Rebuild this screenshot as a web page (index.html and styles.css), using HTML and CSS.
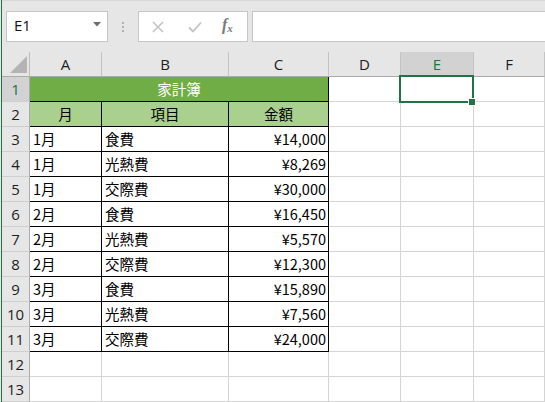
FILE: index.html
```html
<!DOCTYPE html>
<html lang="ja">
<head>
<meta charset="utf-8">
<link rel="stylesheet" href="styles.css">
</head>
<body>
<div class="app">
  <div class="topbar">
    <div class="namebox">
      <span class="nb-text">E1</span>
      <svg class="nb-arrow" width="8" height="5" viewBox="0 0 8 5"><polygon points="0,0 8,0 4,4.5" fill="#6e6e6e"/></svg>
    </div>
    <div class="dots"><i></i><i></i><i></i></div>
    <div class="fbuttons">
      <svg class="ico" width="12" height="12" viewBox="0 0 12 12"><path d="M1 1 L11 11 M11 1 L1 11" stroke="#c3c3c3" stroke-width="1.6" fill="none"/></svg>
      <svg class="ico" width="14" height="12" viewBox="0 0 14 12"><path d="M1 6.5 L5 10.5 L13 1.5" stroke="#c3c3c3" stroke-width="1.8" fill="none"/></svg>
      <span class="fx">f<span class="fx-x">x</span></span>
    </div>
    <div class="finput"></div>
  </div>

  <div class="sheet">
    <div class="corner"><svg width="17" height="17" viewBox="0 0 17 17"><polygon points="17,0 17,17 0,17" fill="#b4b4b4"/></svg></div>
    <div class="ch">A</div>
    <div class="ch">B</div>
    <div class="ch">C</div>
    <div class="ch">D</div>
    <div class="ch sel">E</div>
    <div class="ch">F</div>

    <div class="rh sel">1</div>
    <div class="c title">家計簿</div>
    <div class="c"></div>
    <div class="c e1"><div class="selbox"></div><div class="handle"></div></div>
    <div class="c"></div>

    <div class="rh">2</div>
    <div class="c t head">月</div>
    <div class="c t head">項目</div>
    <div class="c t head">金額</div>
    <div class="c"></div><div class="c"></div><div class="c"></div>

    <div class="rh">3</div>
    <div class="c t">1月</div><div class="c t">食費</div><div class="c t num">¥14,000</div>
    <div class="c"></div><div class="c"></div><div class="c"></div>

    <div class="rh">4</div>
    <div class="c t">1月</div><div class="c t">光熱費</div><div class="c t num">¥8,269</div>
    <div class="c"></div><div class="c"></div><div class="c"></div>

    <div class="rh">5</div>
    <div class="c t">1月</div><div class="c t">交際費</div><div class="c t num">¥30,000</div>
    <div class="c"></div><div class="c"></div><div class="c"></div>

    <div class="rh">6</div>
    <div class="c t">2月</div><div class="c t">食費</div><div class="c t num">¥16,450</div>
    <div class="c"></div><div class="c"></div><div class="c"></div>

    <div class="rh">7</div>
    <div class="c t">2月</div><div class="c t">光熱費</div><div class="c t num">¥5,570</div>
    <div class="c"></div><div class="c"></div><div class="c"></div>

    <div class="rh">8</div>
    <div class="c t">2月</div><div class="c t">交際費</div><div class="c t num">¥12,300</div>
    <div class="c"></div><div class="c"></div><div class="c"></div>

    <div class="rh">9</div>
    <div class="c t">3月</div><div class="c t">食費</div><div class="c t num">¥15,890</div>
    <div class="c"></div><div class="c"></div><div class="c"></div>

    <div class="rh">10</div>
    <div class="c t">3月</div><div class="c t">光熱費</div><div class="c t num">¥7,560</div>
    <div class="c"></div><div class="c"></div><div class="c"></div>

    <div class="rh">11</div>
    <div class="c t">3月</div><div class="c t">交際費</div><div class="c t num">¥24,000</div>
    <div class="c"></div><div class="c"></div><div class="c"></div>

    <div class="rh">12</div>
    <div class="c"></div><div class="c"></div><div class="c"></div>
    <div class="c"></div><div class="c"></div><div class="c"></div>

    <div class="rh">13</div>
    <div class="c"></div><div class="c"></div><div class="c"></div>
    <div class="c"></div><div class="c"></div><div class="c"></div>
  </div>
</div>
</body>
</html>
```

FILE: styles.css
```css
* { box-sizing: border-box; }
html, body { margin: 0; padding: 0; }
body {
  background: #e6e6e6;
  width: 545px;
  height: 402px;
  overflow: hidden;
  font-family: "Noto Sans CJK JP", sans-serif;
}
.app {
  margin-left: 1px;
  border-left: 1px solid #217346;
  height: 402px;
  display: flex;
  flex-direction: column;
}
.topbar {
  height: 52px;
  flex: none;
  display: flex;
  align-items: flex-start;
  padding: 10px 0 0 4px;
  background: #e6e6e6;
  border-top: 1px solid #d8d8d8;
}
.namebox {
  width: 102px;
  height: 31px;
  background: #fff;
  border: 1px solid #c6c6c6;
  display: flex;
  align-items: center;
  justify-content: space-between;
  padding: 0 6px 2px 7px;
}
.nb-text {
  font-family: "Open Sans", sans-serif;
  font-size: 15px;
  color: #111;
  line-height: 1;
}
.nb-arrow { margin-top: -3px; }
.dots {
  width: 30px;
  height: 31px;
  display: flex;
  flex-direction: column;
  align-items: center;
  justify-content: center;
  gap: 2px;
}
.dots i {
  display: block;
  width: 2px;
  height: 2px;
  background: #b0b0b0;
}
.fbuttons {
  width: 110px;
  height: 31px;
  background: #fff;
  border: 1px solid #c6c6c6;
  display: flex;
  align-items: center;
  padding: 0 0 0 13px;
}
.fbuttons .ico:first-child { margin-right: 24px; }
.fbuttons .ico:nth-child(2) { margin-right: 20px; }
.fx {
  font-family: "Liberation Serif", serif;
  font-style: italic;
  font-weight: bold;
  font-size: 16px;
  color: #7a7a7a;
  line-height: 1;
  margin-top: -3px;
  display: flex;
  align-items: flex-end;
}
.fx-x {
  font-size: 11px;
  margin-left: 0;
  margin-bottom: -1px;
}
.finput {
  margin-left: 4px;
  flex: 1;
  height: 31px;
  background: #fff;
  border: 1px solid #c6c6c6;
  border-right: none;
}

.sheet {
  flex: 1;
  display: grid;
  grid-template-columns: 28px 72px 127px 100px 72px 73px 1fr;
  grid-template-rows: repeat(14, 25px);
  background: #fff;
}
.corner {
  background: #e6e6e6;
  border-right: 1px solid #bdbdbd;
  border-bottom: 1px solid #ababab;
  display: flex;
  align-items: flex-end;
  justify-content: flex-end;
  padding: 0 2px 3px 0;
}
.ch {
  background: #e6e6e6;
  border-right: 1px solid #c4c4c4;
  border-bottom: 1px solid #ababab;
  font-family: "Open Sans", sans-serif;
  font-size: 15px;
  color: #1e1e1e;
  display: flex;
  align-items: center;
  justify-content: center;
  line-height: 1;
  padding-top: 1px;
}
.ch.sel {
  background: #d2d2d2;
  color: #217346;
}
.rh {
  background: #e6e6e6;
  border-right: 1px solid #ababab;
  border-bottom: 1px solid #cfcfcf;
  font-family: "Open Sans", sans-serif;
  font-size: 15px;
  color: #1e1e1e;
  display: flex;
  align-items: center;
  justify-content: center;
  line-height: 1;
}
.rh.sel {
  background: #d2d2d2;
  color: #217346;
}
.c {
  border-right: 1px solid #d4d4d4;
  border-bottom: 1px solid #d4d4d4;
  font-size: 14.5px;
  color: #000;
  line-height: 1;
  display: flex;
  align-items: center;
  padding: 0 3px;
  white-space: nowrap;
}
.c.t {
  border-right-color: #000;
  border-bottom-color: #000;
}
.c.title {
  grid-column: span 3;
  background: #70ad47;
  color: #fff;
  justify-content: center;
  border-right-color: #000;
  border-bottom-color: #000;
}
.c.head {
  background: #a9d08e;
  justify-content: center;
}
.c.num {
  justify-content: flex-end;
  padding-right: 2px;
}
.e1 { position: relative; }
.selbox {
  position: absolute;
  left: -2px;
  top: -2px;
  width: 75px;
  height: 28px;
  border: 2px solid #217346;
}
.handle {
  position: absolute;
  left: 68px;
  top: 22px;
  width: 6px;
  height: 6px;
  background: #217346;
  outline: 1px solid #fff;
}
```
